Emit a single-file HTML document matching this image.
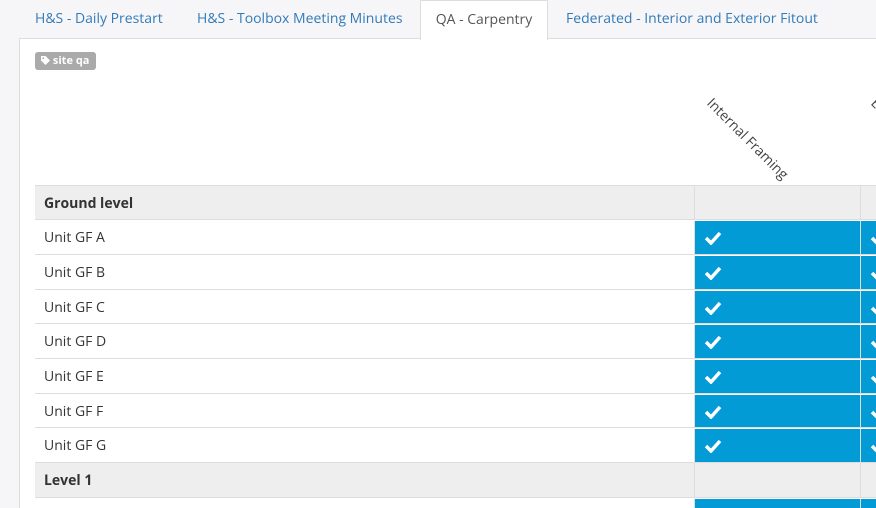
<!DOCTYPE html>
<html><head><style>
*{margin:0;padding:0;box-sizing:border-box}
html,body{width:876px;height:508px;overflow:hidden}
body{background:#f6f6f8;font-family:"Open Sans","Liberation Sans",sans-serif;font-size:14px;color:#333;position:relative}
.tab{position:absolute;top:9px;color:#337ab7;font-size:14px}
.active{position:absolute;left:420px;top:0;width:128px;height:40px;background:#fff;border:1px solid #ddd;border-bottom:none;color:#555;padding-top:9px;text-align:center;z-index:2}
.panel{position:absolute;left:19px;top:38px;width:870px;height:480px;background:#fff;border:1px solid #ddd}
.tag{position:absolute;left:35px;top:52px;width:61px;height:18px;background:#aaa;border-radius:3px;color:#fff;font-size:11px;font-weight:bold;line-height:18px;padding-left:6px}
.row{position:absolute;left:35px;width:860px;border-top:1px solid #ddd}
.row .l{position:absolute;left:9px;top:8px}
.c{position:absolute;top:0;bottom:0;border-left:1px solid #ddd}
.blue{background:#039bd6}
.rot{position:absolute;transform-origin:0 0;transform:rotate(45deg);font-size:14px;color:#444;white-space:nowrap}
</style></head><body>
<div class="tab" style="left:35px">H&amp;S - Daily Prestart</div>
<div class="tab" style="left:197px">H&amp;S - Toolbox Meeting Minutes</div>
<div class="tab" style="left:566px">Federated - Interior and Exterior Fitout</div>
<div class="active">QA - Carpentry</div>
<div class="panel"></div>
<div class="tag"><svg width="9" height="9" viewBox="0 0 10 10" style="vertical-align:-1px"><path d="M0 0H5L10 5L5 10L0 5Z" fill="#fff"/><circle cx="2.5" cy="2.5" r="1" fill="#aaa"/></svg> site qa</div>
<div class="rot" style="left:716px;top:94px">Internal Framing</div>
<div class="rot" style="left:880px;top:94px">E</div>
<div id="t"></div>
<script>
var rows=[["Ground level",1],["Unit GF A"],["Unit GF B"],["Unit GF C"],["Unit GF D"],["Unit GF E"],["Unit GF F"],["Unit GF G"],["Level 1",1],[""]];
var ys=[185,219,254,289,323,358,393,427,462,497,508];
var h="";
for(var i=0;i<rows.length;i++){var hd=rows[i][1];var y=ys[i],hh=ys[i+1]-y;
h+='<div class="row" style="top:'+y+'px;height:'+hh+'px;background:'+(hd?'#eee':'#fff')+';font-weight:'+(hd?'bold':'normal')+'"><span class="l">'+rows[i][0]+'</span>';
for(var k=0;k<2;k++){var x=[659,825][k];h+='<div class="c'+(hd?'':' blue')+'" style="left:'+x+'px;width:166px;border-top:'+(hd?'none':'1px solid #fff')+'">'+(hd||i==9?'':'<svg style="position:absolute;left:9px;top:10px" width="18" height="14" viewBox="0 0 18 14"><path d="M2 7L7 12L16 2" stroke="#fff" stroke-width="3.5" fill="none"/></svg>')+'</div>';}
h+='</div>';}
document.getElementById('t').innerHTML=h;
</script>
</body></html>
